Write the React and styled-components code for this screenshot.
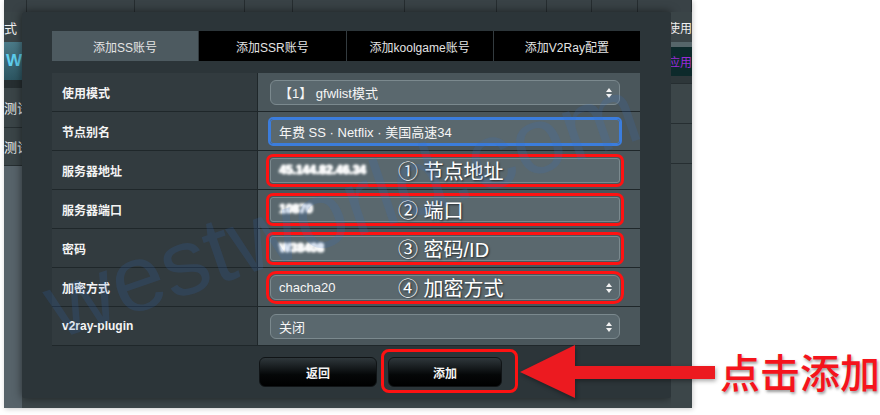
import React from 'react'
import styled, { createGlobalStyle } from 'styled-components'

const GlobalStyle = createGlobalStyle`
  body {
    margin: 0;
    background: #ffffff;
    font-family: "Liberation Sans", "Noto Sans CJK SC", sans-serif;
  }
`

const Canvas = styled.div`
  position: relative;
  width: 880px;
  height: 415px;
  padding-left: 4px;
  box-sizing: border-box;
  overflow: hidden;
`

const Stage = styled.div`
  width: 688px;
  height: 408px;
  background: #3c4649;
  display: flex;
  flex-direction: column;
  box-shadow: 1px 1px 5px rgba(0, 0, 0, 0.2);
`

const TopBar = styled.div`
  height: 12px;
  flex-shrink: 0;
  display: flex;
  background: #394246;
`

const TopCell = styled.div`
  width: ${({ $w }) => $w}px;
  flex-shrink: 0;
  border-right: 1px solid #262d30;
  box-sizing: border-box;
`

const Body = styled.div`
  flex: 1;
  display: flex;
  align-items: flex-start;
`

const Strip = styled.div`
  width: ${({ $w }) => $w}px;
  align-self: stretch;
  display: flex;
  flex-direction: column;
  overflow: hidden;
  background: ${({ $bg }) => $bg};
`

const StripCell = styled.div`
  height: ${({ $h }) => $h}px;
  flex-shrink: 0;
  display: flex;
  align-items: center;
  justify-content: ${({ $end }) => ($end ? 'flex-end' : 'flex-start')};
  background: ${({ $bg = 'transparent' }) => $bg};
  border-bottom: ${({ $line }) => ($line ? '1px solid #262e31' : 'none')};
  color: ${({ $color = '#f0f0f0' }) => $color};
  font-size: ${({ $size = 13 }) => $size}px;
  font-weight: ${({ $bold }) => ($bold ? 700 : 400)};
  white-space: nowrap;
  box-sizing: border-box;
`

const Modal = styled.div`
  width: 649px;
  height: 386px;
  flex-shrink: 0;
  background: #2c3539;
  border-radius: 3px;
  box-shadow: 0 0 10px rgba(0, 0, 0, 0.55);
  padding: 19px 31px 0 30px;
  box-sizing: border-box;
  display: flex;
  flex-direction: column;
`

const Tabs = styled.div`
  height: 30px;
  display: flex;
  gap: 1px;
  background: #333b3f;
`

const Tab = styled.div`
  flex: 1;
  display: flex;
  align-items: center;
  justify-content: center;
  background: ${({ $active }) => ($active ? '#4d5a60' : '#000000')};
  color: #e4e4e4;
  font-size: 12px;
`

const Table = styled.div`
  margin-top: 12px;
  display: flex;
  flex-direction: column;
`

const Row = styled.div`
  height: 39px;
  display: grid;
  grid-template-columns: 206px 1fr;
  border-bottom: 1px solid #1f272a;
  box-sizing: border-box;
`

const Label = styled.div`
  background: #323b3f;
  border-right: 1px solid #1f272a;
  display: flex;
  align-items: center;
  padding-left: 10px;
  color: #f4f4f4;
  font-size: 12px;
  font-weight: 700;
`

const Value = styled.div`
  background: #4a565b;
  display: flex;
  align-items: center;
  padding-left: 12px;
`

const Field = styled.div`
  position: relative;
  width: 350px;
  height: 25px;
  box-sizing: border-box;
  display: flex;
  align-items: center;
  padding-left: 8px;
  background: #5a686e;
  border: 1px solid ${({ $focus }) => ($focus ? '#3b7ddd' : '#7b898e')};
  border-radius: ${({ $select }) => ($select ? '6px' : '3px')};
  outline: ${({ $focus, $marked }) =>
    $focus ? '2px solid #3b7ddd' : $marked ? '3px solid #ff1212' : 'none'};
  outline-offset: ${({ $marked }) => ($marked ? '1px' : '0')};
  color: #f6f6f6;
  font-size: 13px;
  white-space: nowrap;
`

const FieldText = styled.span`
  width: 119px;
  flex-shrink: 0;
`

const Blurred = styled.span`
  width: 119px;
  flex-shrink: 0;
  font-size: 12px;
  font-weight: 700;
  color: #ffffff;
  filter: blur(1.1px);
  text-shadow: 0 0 2px #fff, 0 0 2px #fff, 1px 0 1px #fff;
`

const Note = styled.span`
  font-size: 20px;
  color: #ffffff;
  text-shadow: 1px 1px 2px rgba(0, 0, 0, 0.6);
`

const Arrows = styled.svg`
  position: absolute;
  right: 7px;
  top: 6px;
`

const Actions = styled.div`
  display: flex;
  align-items: flex-start;
  margin-top: 3px;
  padding-left: 207px;
`

const Button = styled.div`
  width: ${({ $w }) => $w}px;
  height: 30px;
  margin-top: ${({ $top = 0 }) => $top}px;
  border-radius: 6px;
  border: 1px solid #101416;
  box-sizing: border-box;
  background: linear-gradient(#2f373b, #050708 60%, #000);
  display: flex;
  align-items: center;
  justify-content: center;
  color: #f4f4f4;
  font-size: 12px;
  font-weight: 700;
`

const RedFrame = styled.div`
  margin-left: 4px;
  padding: 5px 13px 3px 4px;
  border: 3px solid #ff1212;
  border-radius: 8px;
`

const Callout = styled.div`
  position: absolute;
  left: 720px;
  top: 351px;
  font-family: "Noto Sans CJK SC", sans-serif;
  font-size: 40px;
  line-height: 1;
  font-weight: 500;
  color: #f5141c;
  text-shadow: 1px 2px 3px rgba(0, 0, 0, 0.4);
  white-space: nowrap;
`

const ArrowSvg = styled.svg`
  position: absolute;
  left: 518px;
  top: 343px;
  filter: drop-shadow(1px 2px 2px rgba(0, 0, 0, 0.35));
`

const Watermark = styled.div`
  position: absolute;
  left: 48px;
  top: 262px;
  transform: rotate(-19deg);
  transform-origin: left center;
  font-family: "Liberation Sans", sans-serif;
  font-size: 94px;
  line-height: 1;
  color: rgba(50, 115, 205, 0.16);
  white-space: nowrap;
  pointer-events: none;
`

const topCells = [23, 108, 110, 48, 112, 92, 50, 45, 46, 54]

const tabs = ['添加SS账号', '添加SSR账号', '添加koolgame账号', '添加V2Ray配置']

const rows = [
  { label: '使用模式', select: true, value: '【1】 gfwlist模式' },
  { label: '节点别名', focus: true, value: '年费 SS · Netflix · 美国高速34' },
  { label: '服务器地址', blur: '45.144.82.46.34', note: '① 节点地址' },
  { label: '服务器端口', blur: '10870', note: '② 端口' },
  { label: '密码', blur: 'W38408', note: '③ 密码/ID' },
  { label: '加密方式', select: true, value: 'chacha20', note: '④ 加密方式' },
  { label: 'v2ray-plugin', select: true, value: '关闭' },
]

const SelectArrows = () => (
  <Arrows width="6" height="12" viewBox="0 0 6 12">
    <path d="M3 1 L6 5 L0 5 Z" fill="#f2f2f2" />
    <path d="M0 7 L6 7 L3 11 Z" fill="#f2f2f2" />
  </Arrows>
)

export default function App() {
  return (
    <Canvas>
      <GlobalStyle />
      <Stage>
        <TopBar>
          {topCells.map((w, i) => (
            <TopCell key={i} $w={w} />
          ))}
        </TopBar>
        <Body>
          <Strip $w={18} $bg="#57636a">
            <StripCell $h={30} $bg="#3a4447">式</StripCell>
            <StripCell
              $h={38}
              $end
              $bold
              $size={17}
              $bg="linear-gradient(#4b7a88, #2c5561)"
              $color="#5fd0f0"
            >
              W
            </StripCell>
            <StripCell $h={8} $bg="#262e31" />
            <StripCell $h={40} $line $bg="#3a4447">测试</StripCell>
            <StripCell $h={38} $line $bg="#3a4447">测试</StripCell>
          </Strip>
          <Modal>
            <Tabs>
              {tabs.map((t, i) => (
                <Tab key={t} $active={i === 0}>
                  {t}
                </Tab>
              ))}
            </Tabs>
            <Table>
              {rows.map((r) => (
                <Row key={r.label}>
                  <Label>{r.label}</Label>
                  <Value>
                    <Field $select={r.select} $focus={r.focus} $marked={!!r.note}>
                      {r.blur ? <Blurred>{r.blur}</Blurred> : <FieldText>{r.value}</FieldText>}
                      {r.note && <Note>{r.note}</Note>}
                      {r.select && <SelectArrows />}
                    </Field>
                  </Value>
                </Row>
              ))}
            </Table>
            <Actions>
              <Button $w={118} $top={8}>返回</Button>
              <RedFrame>
                <Button $w={114}>添加</Button>
              </RedFrame>
            </Actions>
          </Modal>
          <Strip $w={21} $bg="#3c4649">
            <StripCell $h={30} $end $size={12} $bg="#3a4447">使用</StripCell>
            <StripCell $h={5} $bg="#56666a" />
            <StripCell $h={29} $end $size={12} $bg="#0d2a2b" $color="#9a2ad8">应用</StripCell>
            <StripCell $h={8} $line $bg="#2e373a" />
            <StripCell $h={40} $line />
            <StripCell $h={40} $line />
          </Strip>
        </Body>
      </Stage>
      <Watermark>westworld.com</Watermark>
      <ArrowSvg width="200" height="56" viewBox="0 0 200 56">
        <polygon points="2,29 57,2 57,23 197,23 197,36 57,36 57,55" fill="#ec1a20" />
      </ArrowSvg>
      <Callout>点击添加</Callout>
    </Canvas>
  )
}
